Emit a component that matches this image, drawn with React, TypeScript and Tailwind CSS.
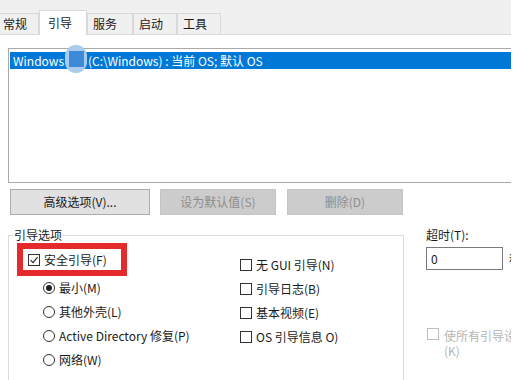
import React from "react";

const Tab = ({ label, active, w, first }: { label: string; active?: boolean; w: number; first?: boolean }) => (
  <div
    className={
      (active
        ? "h-[25px] bg-white -mb-px border-[#d9d9d9] pl-[8px] z-10 "
        : "h-[21px] bg-[#f0f0f0] border-[#d9d9d9] pl-[5px] ") +
      (first ? "ml-[-8px] pl-[10px] " : "") +
      "border border-b-0 flex items-center text-[12px] text-[#1a1a1a] leading-none shrink-0"
    }
    style={{ width: w }}
  >
    {label}
  </div>
);

const CheckBox = ({ checked, faded }: { checked?: boolean; faded?: boolean }) => (
  <div
    className={
      "w-[12px] h-[12px] border bg-white flex items-center justify-center shrink-0 " +
      (faded ? "border-[#bdbdbd]" : "border-[#333333]")
    }
  >
    {checked && (
      <svg width="10" height="10" viewBox="0 0 10 10">
        <path d="M1.5 5.2 L4 7.6 L8.6 2.2" fill="none" stroke="#222" strokeWidth="1.1" />
      </svg>
    )}
  </div>
);

const Radio = ({ checked }: { checked?: boolean }) => (
  <div className="w-[12px] h-[12px] rounded-full border border-[#333333] bg-white flex items-center justify-center shrink-0">
    {checked && <div className="w-[6px] h-[6px] rounded-full bg-[#222]" />}
  </div>
);

export default function App() {
  return (
    <div className="w-[520px] h-[380px] bg-white overflow-hidden font-[family-name:'Noto_Sans_CJK_SC','Noto_Sans',sans-serif] text-[12px] text-[#1a1a1a]">
      <div className="w-[511px] h-[380px] overflow-hidden">
        {/* tab bar */}
        <div className="h-[35px] w-[511px] bg-[#f0f0f0] border-b border-[#d9d9d9] flex items-end">
          <Tab label="常规" w={47} first />
          <Tab label="引导" w={48} active />
          <Tab label="服务" w={46} />
          <Tab label="启动" w={44} />
          <Tab label="工具" w={44} />
        </div>

        <div className="pl-[8px]">
          {/* list box */}
          <div className="mt-[13px] h-[135px] border border-r-0 border-[#a9a9a9] pt-[3px] pl-[1px]">
            <div className="h-[17px] bg-[#0078d7] text-white flex items-center pl-[3px] leading-none">
              <span>Windows</span>
              <span className="relative inline-block w-[24px] h-[17px]">
                <span className="absolute left-[1px] top-[-7px] w-[22px] h-[28px] rounded-full bg-[#a9cbec] flex items-center justify-center">
                  <span className="w-[15px] h-[16px] bg-[#3d8bd8]" />
                </span>
              </span>
              <span>(C:\Windows) : 当前 OS; 默认 OS</span>
            </div>
          </div>

          {/* buttons */}
          <div className="mt-[6px] flex pl-[2px]">
            <div className="w-[140px] h-[26px] bg-[#e1e1e1] border border-[#adadad] flex items-center justify-center">
              高级选项(V)...
            </div>
            <div className="ml-[10px] w-[116px] h-[26px] bg-[#cccccc] border border-[#c4c4c4] flex items-center justify-center text-[#8c8c8c]">
              设为默认值(S)
            </div>
            <div className="ml-[11px] w-[116px] h-[26px] bg-[#cccccc] border border-[#c4c4c4] flex items-center justify-center text-[#8c8c8c]">
              删除(D)
            </div>
          </div>

          {/* lower area */}
          <div className="mt-[12px] flex">
            <div className="mt-[8px] relative w-[396px] h-[200px] border border-[#dcdcdc] shrink-0">
              <div className="absolute left-[4px] top-[-9px] bg-white px-[1px] leading-[16px]">引导选项</div>
              <div className="flex pt-[7px] pl-[8px]">
                <div className="w-[223px] flex flex-col">
                  <div className="w-[110px] h-[33px] border-[6px] border-[#e42a2a] flex items-center pl-[5px] gap-[4px]">
                    <CheckBox checked />
                    <span>安全引导(F)</span>
                  </div>
                  {["最小(M)", "其他外壳(L)", "Active Directory 修复(P)", "网络(W)"].map((t, i) => (
                    <div key={t} className="h-[24px] flex items-center pl-[26px] gap-[4px]">
                      <Radio checked={i === 0} />
                      <span>{t}</span>
                    </div>
                  ))}
                </div>
                <div className="mt-[10px] flex flex-col">
                  {["无 GUI 引导(N)", "引导日志(B)", "基本视频(E)", "OS 引导信息 O)"].map((t) => (
                    <div key={t} className="h-[24px] flex items-center gap-[4px]">
                      <CheckBox />
                      <span>{t}</span>
                    </div>
                  ))}
                </div>
              </div>
            </div>

            <div className="ml-[22px] flex flex-col shrink-0">
              <div className="leading-[16px]">超时(T):</div>
              <div className="mt-[4px] flex items-center">
                <div className="w-[77px] h-[23px] border border-[#7a7a7a] bg-white flex items-center pl-[4px]">0</div>
                <span className="ml-[6px]">秒</span>
              </div>
              <div className="mt-[58px] flex items-start gap-[5px] pl-[1px]">
                <CheckBox faded />
                <div className="flex flex-col text-[#b4b4b4] leading-[15px]">
                  <span className="whitespace-nowrap">使所有引导设</span>
                  <span>(K)</span>
                </div>
              </div>
            </div>
          </div>
        </div>
      </div>
    </div>
  );
}
